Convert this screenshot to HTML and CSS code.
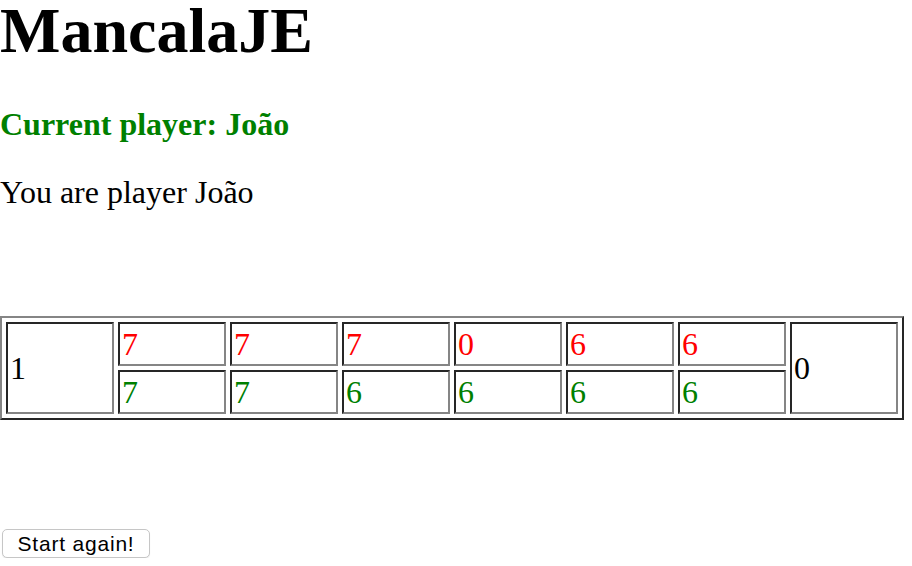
FILE: index.html
```html
<!DOCTYPE html>
<html>
<head>
<meta charset="utf-8">
<title>MancalaJE</title>
<link rel="stylesheet" href="styles.css">
</head>
<body>
<h1 class="title">MancalaJE</h1>
<h3 class="current">Current player: João</h3>
<p class="you">You are player João</p>
<table class="board">
  <tr>
    <td class="store" rowspan="2">1</td>
    <td class="pit red">7</td>
    <td class="pit red">7</td>
    <td class="pit red">7</td>
    <td class="pit red">0</td>
    <td class="pit red">6</td>
    <td class="pit red">6</td>
    <td class="store" rowspan="2">0</td>
  </tr>
  <tr>
    <td class="pit green">7</td>
    <td class="pit green">7</td>
    <td class="pit green">6</td>
    <td class="pit green">6</td>
    <td class="pit green">6</td>
    <td class="pit green">6</td>
  </tr>
</table>
<div class="actions">
  <button class="restart" type="button">Start again!</button>
</div>
</body>
</html>
```
FILE: styles.css
```css
html, body {
  margin: 0;
  padding: 0;
  background: #ffffff;
}
body {
  font-family: "Liberation Serif", "Times New Roman", serif;
  font-size: 32px;
  color: #000000;
}
.title {
  margin: 0;
  font-size: 64px;
  font-weight: bold;
  line-height: 61px;
}
.current {
  margin: 45px 0 0 0;
  font-size: 32px;
  font-weight: bold;
  line-height: 37px;
  color: #008000;
}
.you {
  margin: 31px 0 0 0;
  line-height: 37px;
}
.board {
  margin-top: 105px;
  width: 904px;
  table-layout: fixed;
  border-collapse: separate;
  border-spacing: 4px;
  border-width: 2px;
  border-style: solid;
  border-color: #858585 #262626 #262626 #858585;
}
.board td {
  width: 100px;
  padding: 2px;
  line-height: 36px;
  border-width: 2px;
  border-style: solid;
  border-color: #262626 #858585 #858585 #262626;
  vertical-align: middle;
  text-align: left;
}
.red {
  color: #ff0000;
}
.green {
  color: #008000;
}
.actions {
  margin-top: 109px;
  display: flex;
  padding-left: 2px;
}
.restart {
  width: 148px;
  height: 29px;
  padding: 0;
  background: #ffffff;
  border: 1px solid #c6c6c6;
  border-radius: 5px;
  box-shadow: 0 1px 1px rgba(0, 0, 0, 0.08);
  font-family: "Liberation Sans", Arial, sans-serif;
  font-size: 21px;
  letter-spacing: 0.8px;
  color: #000000;
  line-height: 27px;
}
```
